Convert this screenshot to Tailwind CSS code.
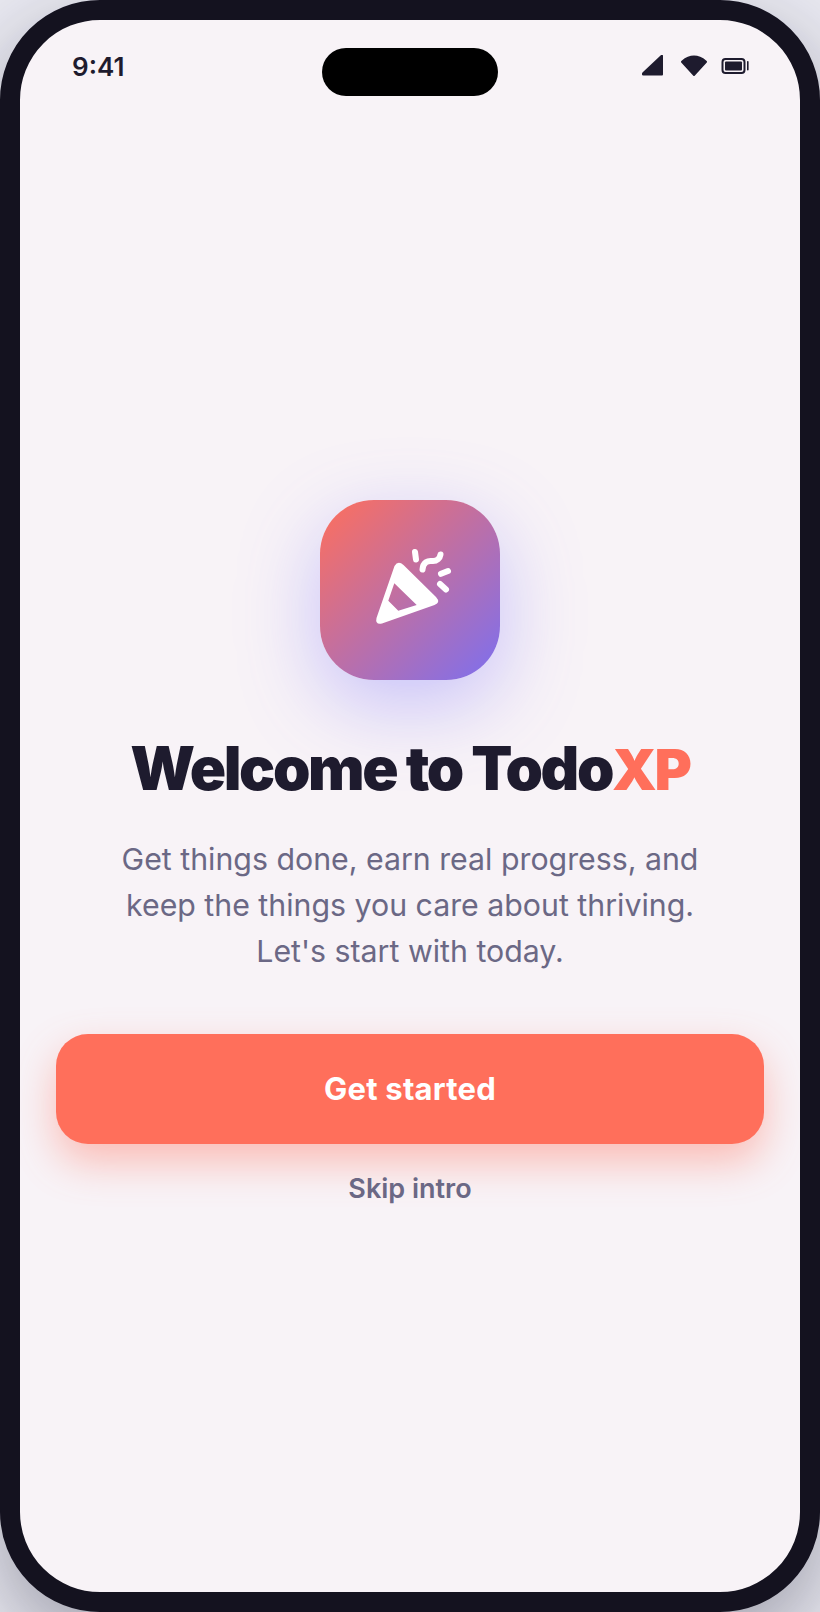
<!DOCTYPE html>
<html lang="en">
<head>
    <meta charset="UTF-8">
    <meta name="viewport" content="width=device-width, initial-scale=1.0">
    <title>TodoXP Welcome</title>
    <script src="https://cdn.jsdelivr.net/npm/@tailwindcss/browser@4"></script>
</head>
<body class="bg-[#e8e8f0] font-['Inter',sans-serif]">
    <!-- Phone frame -->
    <div class="relative w-[820px] h-[1612px] rounded-[100px] border-[20px] border-[#14121f] bg-[#f8f3f7] overflow-hidden flex flex-col shadow-[0_30px_80px_rgba(26,26,46,0.35)]">
        <!-- Dynamic island -->
        <div class="absolute top-[28px] left-[302px] w-[176px] h-[48px] rounded-full bg-black"></div>

        <!-- Status bar -->
        <div class="h-[92px] shrink-0 flex items-center justify-between pl-[52px] pr-[51.5px]">
            <span class="text-[26px] leading-[32px] font-semibold text-[#1e1b2e] mt-[2px]">9:41</span>
            <div class="flex items-center">
                <svg width="22" height="22" viewBox="641 55 22 22"><path d="M642.5 72.6 L660.8 55.2 Q663 53.8 663 56.2 L663 74.6 Q663 75.6 662 75.6 L643.4 75.6 Q641 75 642.5 72.6 Z" fill="#1e1b2e"/></svg>
                <svg class="ml-[17px]" width="28" height="22" viewBox="680 55 28 22"><path d="M681.2 62.4 Q680.6 61.4 681.6 60.7 Q694 50.5 706.4 60.7 Q707.4 61.4 706.8 62.4 L694.9 75.4 Q694 76.4 693.1 75.4 Z" fill="#1e1b2e"/></svg>
                <svg class="ml-[13px]" width="28" height="16" viewBox="720.5 58 28 16"><rect x="722" y="59" width="22" height="14" rx="3" fill="none" stroke="#1e1b2e" stroke-width="2"/><rect x="724.5" y="61.5" width="17" height="9" rx="1" fill="#1e1b2e"/><rect x="746.5" y="61" width="1.6" height="9.5" rx="0.8" fill="#1e1b2e"/></svg>
            </div>
        </div>

        <!-- Welcome content -->
        <div class="flex-1 flex flex-col items-center justify-center px-[36px] pt-[3px]">
            <div class="w-[180px] h-[180px] rounded-[54px] flex items-center justify-center bg-[linear-gradient(135deg,#ff6f5b,#7c6ff0)] shadow-[0_24px_80px_rgba(108,99,255,0.35)]">
                <svg width="100" height="100" viewBox="360 540 100 100">
                    <path fill="#fff" fill-rule="evenodd" d="M394.5 566 Q398 560 403.5 565 L436 597 Q441 602.5 434.5 605 L382 623.5 Q375 625 376.5 618 Z M394.3 583.3 L416.7 605 L398.3 610.7 L388.3 600.7 Z"/>
                    <g fill="none" stroke="#fff" stroke-width="6" stroke-linecap="round">
                        <path d="M415 552 L416 559.5"/>
                        <path d="M422.5 569.5 C423 562 428 560.5 432 561 C437 561.5 440 558 440.5 554.5"/>
                        <path d="M441 573.8 L448 571"/>
                        <path d="M440 584 L446 589.5"/>
                    </g>
                </svg>
            </div>

            <h1 class="mt-[52px] text-[60px] leading-[72px] font-black tracking-[-2.4px] text-[#1e1b2e] whitespace-nowrap">Welcome to Todo<span class="text-[#ff6f5b] text-[57px] leading-none tracking-[-2.2px]">XP</span></h1>

            <p class="mt-[32px] text-[30.3px] leading-[46px] text-center text-[#6b6885]">Get things done, earn real progress, and<br>keep the things you care about thriving.<br>Let's start with today.</p>

            <button class="mt-[60px] w-full h-[110px] rounded-[32px] bg-[#ff6f5b] text-white text-[31px] tracking-[0.2px] font-bold shadow-[0_18px_40px_rgba(255,111,91,0.42)]">Get started</button>

            <a class="mt-[27px] text-[27px] leading-[36px] font-semibold text-[#6b6885]">Skip intro</a>
        </div>
    </div>
</body>
</html>
